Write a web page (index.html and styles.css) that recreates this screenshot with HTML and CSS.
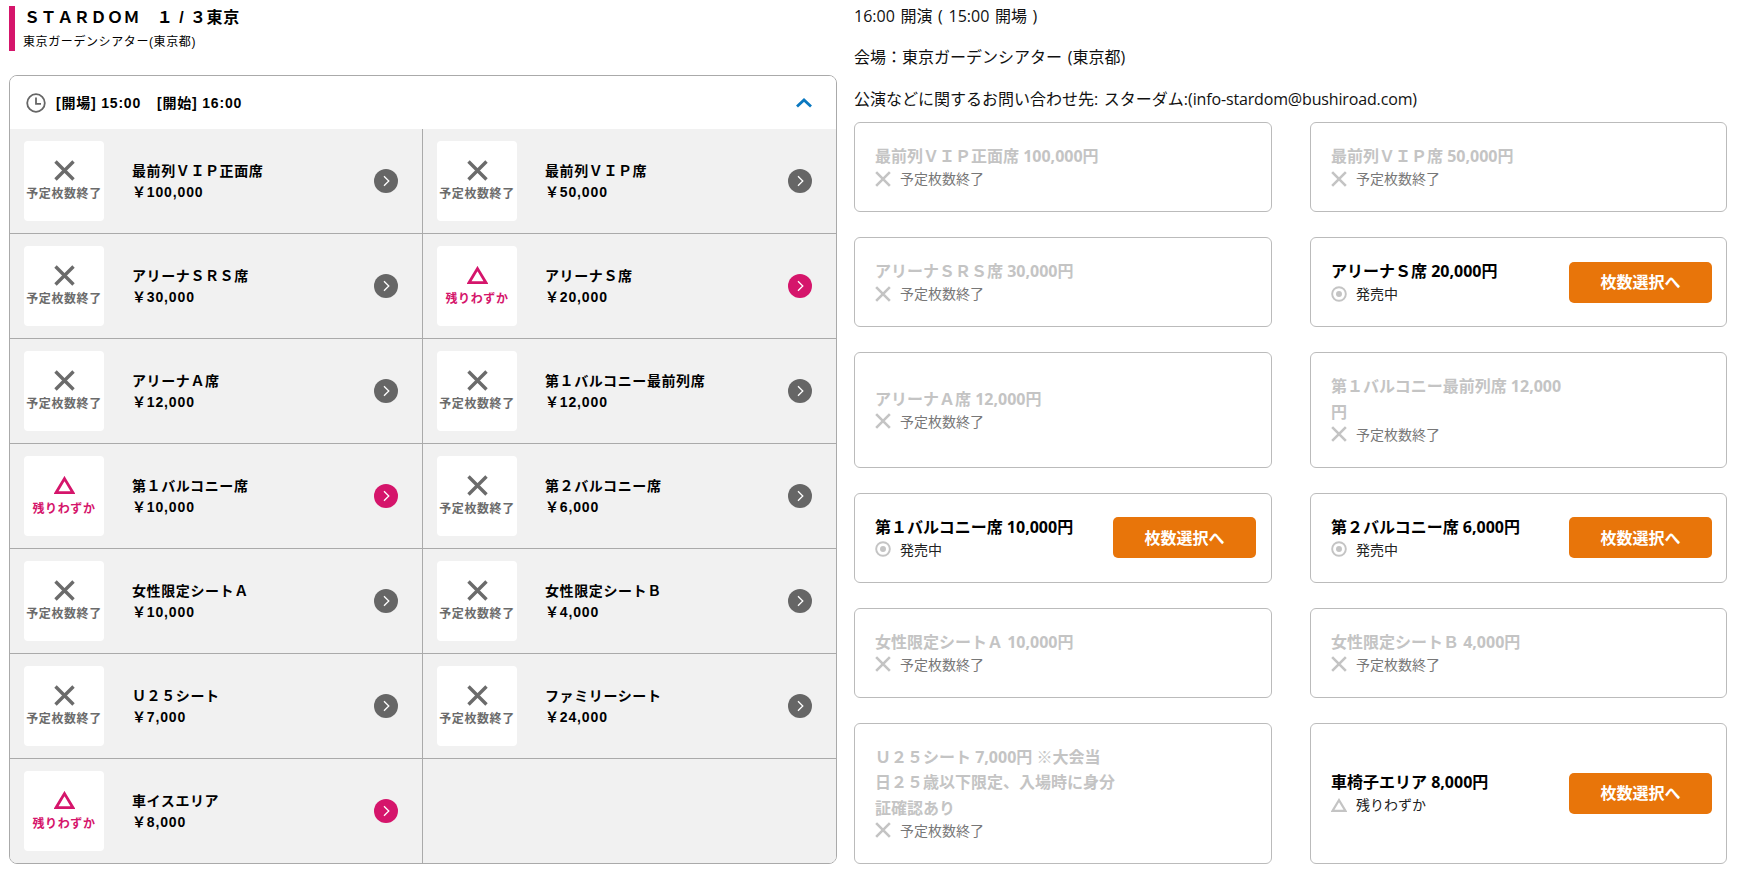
FILE: index.html
```html
<!DOCTYPE html>
<html lang="ja">
<head>
<meta charset="utf-8">
<title>STARDOM 1/3 東京</title>
<link rel="stylesheet" href="styles.css">
</head>
<body>
<svg class="defs" width="0" height="0" aria-hidden="true">
  <symbol id="i-x" viewBox="0 0 21 21"><path d="M1.5 1.5 19.5 19.5M19.5 1.5 1.5 19.5" fill="none" stroke="currentColor" stroke-width="3.4"/></symbol>
  <symbol id="i-tri" viewBox="0 0 21 18"><path d="M10.5 2.6 19 16.7H2Z" fill="none" stroke="currentColor" stroke-width="2.8"/></symbol>
  <symbol id="i-ring" viewBox="0 0 15 15"><circle cx="7.5" cy="7.5" r="6.4" fill="none" stroke="currentColor" stroke-width="1.8"/><circle cx="7.5" cy="7.5" r="2.8" fill="currentColor"/></symbol>
  <symbol id="i-go" viewBox="0 0 24 24"><circle cx="12" cy="12" r="12" fill="currentColor"/><path d="M10 7.2 14.8 12 10 16.8" fill="none" stroke="#fff" stroke-width="1.3"/></symbol>
</svg>
<main class="page">
  <section class="left">
    <header class="event-head">
      <h1 class="event-title">ＳＴＡＲＤＯＭ　１<span class="slash">/</span>３東京</h1>
      <p class="event-venue">東京ガーデンシアター(東京都)</p>
    </header>
    <div class="panel">
      <div class="panel-head">
        <svg class="clock" viewBox="0 0 20 20"><circle cx="10" cy="10" r="8.8" fill="none" stroke="#666" stroke-width="1.8"/><path d="M10 4.6V10.8H15" fill="none" stroke="#666" stroke-width="1.8"/></svg>
        <span class="panel-time"><span>[開場] 15:00</span><span class="time-next">[開始] 16:00</span></span>
        <svg class="chevron" viewBox="0 0 16 10"><path d="M1 8.6 8 2 15 8.6" fill="none" stroke="#0a78c0" stroke-width="2.8"/></svg>
      </div>
      <div class="seats">
        <a class="seat"><span class="badge out"><svg class="b-x"><use href="#i-x"/></svg><b>予定枚数終了</b></span><span class="seat-info"><b>最前列ＶＩＰ正面席</b><b class="price">￥100,000</b></span><svg class="go out"><use href="#i-go"/></svg></a>
        <a class="seat"><span class="badge out"><svg class="b-x"><use href="#i-x"/></svg><b>予定枚数終了</b></span><span class="seat-info"><b>最前列ＶＩＰ席</b><b class="price">￥50,000</b></span><svg class="go out"><use href="#i-go"/></svg></a>
        <a class="seat"><span class="badge out"><svg class="b-x"><use href="#i-x"/></svg><b>予定枚数終了</b></span><span class="seat-info"><b>アリーナＳＲＳ席</b><b class="price">￥30,000</b></span><svg class="go out"><use href="#i-go"/></svg></a>
        <a class="seat"><span class="badge few"><svg class="b-tri"><use href="#i-tri"/></svg><b>残りわずか</b></span><span class="seat-info"><b>アリーナＳ席</b><b class="price">￥20,000</b></span><svg class="go few"><use href="#i-go"/></svg></a>
        <a class="seat"><span class="badge out"><svg class="b-x"><use href="#i-x"/></svg><b>予定枚数終了</b></span><span class="seat-info"><b>アリーナＡ席</b><b class="price">￥12,000</b></span><svg class="go out"><use href="#i-go"/></svg></a>
        <a class="seat"><span class="badge out"><svg class="b-x"><use href="#i-x"/></svg><b>予定枚数終了</b></span><span class="seat-info"><b>第１バルコニー最前列席</b><b class="price">￥12,000</b></span><svg class="go out"><use href="#i-go"/></svg></a>
        <a class="seat"><span class="badge few"><svg class="b-tri"><use href="#i-tri"/></svg><b>残りわずか</b></span><span class="seat-info"><b>第１バルコニー席</b><b class="price">￥10,000</b></span><svg class="go few"><use href="#i-go"/></svg></a>
        <a class="seat"><span class="badge out"><svg class="b-x"><use href="#i-x"/></svg><b>予定枚数終了</b></span><span class="seat-info"><b>第２バルコニー席</b><b class="price">￥6,000</b></span><svg class="go out"><use href="#i-go"/></svg></a>
        <a class="seat"><span class="badge out"><svg class="b-x"><use href="#i-x"/></svg><b>予定枚数終了</b></span><span class="seat-info"><b>女性限定シートＡ</b><b class="price">￥10,000</b></span><svg class="go out"><use href="#i-go"/></svg></a>
        <a class="seat"><span class="badge out"><svg class="b-x"><use href="#i-x"/></svg><b>予定枚数終了</b></span><span class="seat-info"><b>女性限定シートＢ</b><b class="price">￥4,000</b></span><svg class="go out"><use href="#i-go"/></svg></a>
        <a class="seat"><span class="badge out"><svg class="b-x"><use href="#i-x"/></svg><b>予定枚数終了</b></span><span class="seat-info"><b>Ｕ２５シート</b><b class="price">￥7,000</b></span><svg class="go out"><use href="#i-go"/></svg></a>
        <a class="seat"><span class="badge out"><svg class="b-x"><use href="#i-x"/></svg><b>予定枚数終了</b></span><span class="seat-info"><b>ファミリーシート</b><b class="price">￥24,000</b></span><svg class="go out"><use href="#i-go"/></svg></a>
        <a class="seat last"><span class="badge few"><svg class="b-tri"><use href="#i-tri"/></svg><b>残りわずか</b></span><span class="seat-info"><b>車イスエリア</b><b class="price">￥8,000</b></span><svg class="go few"><use href="#i-go"/></svg></a>
        <div class="seat last"></div>
      </div>
    </div>
  </section>
  <section class="right">
    <p class="info">16:00 開演 ( 15:00 開場 )</p>
    <p class="info info-mid">会場：東京ガーデンシアター (東京都)</p>
    <p class="info info-last">公演などに関するお問い合わせ先: スターダム:<span class="mail">(info-stardom@bushiroad.com)</span></p>
    <div class="tickets">
      <div class="ticket off"><div class="t-text"><div class="t-name">最前列ＶＩＰ正面席 100,000円</div><div class="t-status"><svg class="s-icon"><use href="#i-x"/></svg>予定枚数終了</div></div></div>
      <div class="ticket off"><div class="t-text"><div class="t-name">最前列ＶＩＰ席 50,000円</div><div class="t-status"><svg class="s-icon"><use href="#i-x"/></svg>予定枚数終了</div></div></div>
      <div class="ticket off"><div class="t-text"><div class="t-name">アリーナＳＲＳ席 30,000円</div><div class="t-status"><svg class="s-icon"><use href="#i-x"/></svg>予定枚数終了</div></div></div>
      <div class="ticket"><div class="t-text"><div class="t-name">アリーナＳ席 20,000円</div><div class="t-status"><svg class="s-icon"><use href="#i-ring"/></svg>発売中</div></div><a class="t-btn">枚数選択へ</a></div>
      <div class="ticket off"><div class="t-text"><div class="t-name">アリーナＡ席 12,000円</div><div class="t-status"><svg class="s-icon"><use href="#i-x"/></svg>予定枚数終了</div></div></div>
      <div class="ticket off"><div class="t-text"><div class="t-name">第１バルコニー最前列席 12,000円</div><div class="t-status"><svg class="s-icon"><use href="#i-x"/></svg>予定枚数終了</div></div></div>
      <div class="ticket"><div class="t-text"><div class="t-name">第１バルコニー席 10,000円</div><div class="t-status"><svg class="s-icon"><use href="#i-ring"/></svg>発売中</div></div><a class="t-btn">枚数選択へ</a></div>
      <div class="ticket"><div class="t-text"><div class="t-name">第２バルコニー席 6,000円</div><div class="t-status"><svg class="s-icon"><use href="#i-ring"/></svg>発売中</div></div><a class="t-btn">枚数選択へ</a></div>
      <div class="ticket off"><div class="t-text"><div class="t-name">女性限定シートＡ 10,000円</div><div class="t-status"><svg class="s-icon"><use href="#i-x"/></svg>予定枚数終了</div></div></div>
      <div class="ticket off"><div class="t-text"><div class="t-name">女性限定シートＢ 4,000円</div><div class="t-status"><svg class="s-icon"><use href="#i-x"/></svg>予定枚数終了</div></div></div>
      <div class="ticket off"><div class="t-text"><div class="t-name">Ｕ２５シート 7,000円 ※大会当日２５歳以下限定、入場時に身分証確認あり</div><div class="t-status"><svg class="s-icon"><use href="#i-x"/></svg>予定枚数終了</div></div></div>
      <div class="ticket"><div class="t-text"><div class="t-name">車椅子エリア 8,000円</div><div class="t-status"><svg class="s-icon"><use href="#i-tri"/></svg>残りわずか</div></div><a class="t-btn">枚数選択へ</a></div>
    </div>
  </section>
</main>
</body>
</html>
```
FILE: styles.css
```css
* { box-sizing: border-box; }
html, body { margin: 0; padding: 0; background: #fff; }
body {
  color: #000;
  font-family: "Liberation Sans", "Noto Sans CJK JP", sans-serif;
  overflow: hidden;
}
.defs { position: absolute; }
p, h1 { margin: 0; }

.page { display: flex; align-items: flex-start; gap: 17px; padding-left: 9px; width: 1737px; height: 873px; }

/* left column */
.left { flex: 0 0 828px; padding-top: 6px; letter-spacing: .6px; }
.event-head { height: 45px; border-left: 6px solid #d5156b; padding-left: 8px; }
.event-title { font-size: 16px; font-weight: 700; line-height: 22px; padding-top: 1px; padding-left: 1px; letter-spacing: .6px; }
.slash { display: inline-block; width: 16.6px; text-align: center; }
.event-venue { font-size: 12px; line-height: 20px; margin-top: 3px; }

.panel { margin-top: 24px; border: 1px solid #aaa; border-radius: 8px; overflow: hidden; }
.panel-head { display: flex; align-items: center; height: 53px; padding: 0 24px 0 16px; background: #fff; }
.clock { width: 20px; height: 20px; flex: none; }
.panel-time { flex: 1; margin-left: 10px; padding-bottom: 2px; font-size: 14px; font-weight: 700; letter-spacing: .8px; }
.time-next { margin-left: 16px; }
.chevron { width: 16px; height: 10px; flex: none; }

.seats { display: grid; grid-template-columns: 413px 413px; background: #f1f1f1; }
.seat { display: flex; align-items: center; height: 105px; padding: 12px 24px 12px 14px; border-bottom: 1px solid #aaa; }
.seat:nth-child(odd) { border-right: 1px solid #aaa; }
.seat.last { border-bottom: 0; height: 104px; }
.badge { display: flex; flex-direction: column; align-items: center; flex: none; width: 80px; height: 80px; background: #fff; border-radius: 4px; font-size: 12px; line-height: 18px; }
.badge.out { color: #6b6b6b; }
.badge.few { color: #d5156b; }
.b-x { width: 21px; height: 21px; margin-top: 19px; margin-bottom: 4px; }
.b-tri { width: 21px; height: 18px; margin-top: 20px; margin-bottom: 6px; }
.seat-info { display: flex; flex-direction: column; flex: 1; margin-left: 28px; padding-top: 1px; font-size: 14px; line-height: 21px; }
.price { letter-spacing: .85px; }
.go { width: 24px; height: 24px; flex: none; }
.go.out { color: #666; }
.go.few { color: #d5156b; }

/* right column */
.right { flex: 0 0 873px; padding-top: 4px; font-family: "Open Sans", "Noto Sans CJK JP", sans-serif; font-size: 16px; }
.info { line-height: 25px; margin-bottom: 16px; color: #111; word-spacing: 1.5px; }
.info-mid { margin-bottom: 17px; }
.info-last { margin-bottom: 10px; }
.mail { letter-spacing: -.15px; }

.tickets { display: grid; grid-template-columns: 418px 417px; column-gap: 38px; row-gap: 25px; }
.ticket { display: flex; align-items: center; padding: 20px 14px 20px 20px; min-height: 90px; border: 1px solid #bbb; border-radius: 6px; }
.ticket:nth-child(odd) { padding-right: 15px; }
.t-text { flex: 0 0 241px; margin-right: -4px; padding-top: 1px; }
.t-name { font-weight: 700; line-height: 25.5px; }
.t-status { display: flex; align-items: center; margin-top: -3.5px; font-size: 14px; line-height: 25px; color: #222; }
.s-icon { width: 16px; height: 16px; margin-right: 9px; color: #c4c4c4; flex: none; }
.ticket.off .t-name { color: #c4c4c4; }
.ticket.off .t-status { color: #777; }
.t-btn { display: flex; align-items: center; justify-content: center; flex: none; width: 143px; height: 41px; margin-left: auto; padding-bottom: 2px; background: #e8750a; border-radius: 5px; color: #fff; font-weight: 700; font-size: 16px; }
```
